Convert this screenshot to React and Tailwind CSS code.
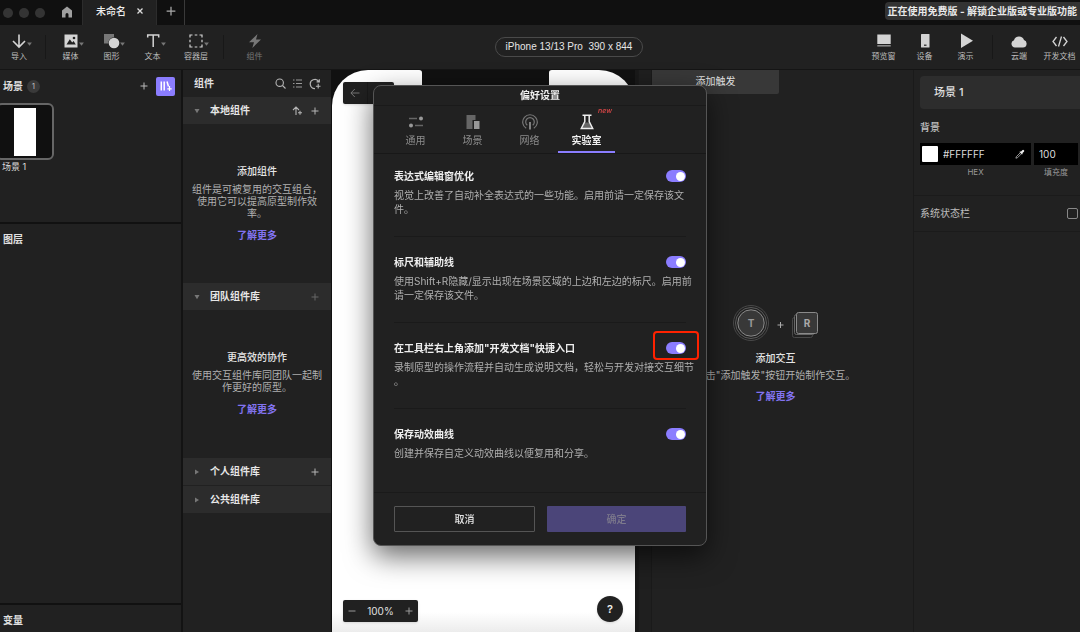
import React from "react";

const Caret = () => (
  <svg viewBox="0 0 6 5" className="absolute top-[9px] left-full h-[4px] w-[5px]" aria-hidden="true">
    <path d="M0 0.5h6L3 4.8z" fill="#777" />
  </svg>
);

function Tool({ label, children, caret, width = "w-[41px]", dim }) {
  return (
    <button className={`flex ${width} shrink-0 flex-col items-center gap-[2px] ${dim ? "text-[#777]" : "text-[#d4d4d4]"}`}>
      <span className="relative block">
        <svg viewBox="0 0 16 16" className="h-4 w-4" fill="currentColor" aria-hidden="true">
          {children}
        </svg>
        {caret && <Caret />}
      </span>
      <span className={`text-[8px] leading-[10px] whitespace-nowrap ${dim ? "" : "text-[#bdbdbd]"}`}>{label}</span>
    </button>
  );
}

const Divider = () => <span className="block h-6 w-px shrink-0 bg-[#181818]" />;

function Plus({ className = "h-[8px] w-[8px] text-[#b5b5b5]" }) {
  return (
    <svg viewBox="0 0 8 8" className={className} fill="none" stroke="currentColor" strokeWidth="1" aria-hidden="true">
      <path d="M4 0.5v7M0.5 4h7" />
    </svg>
  );
}

function TitleBar() {
  return (
    <header className="flex h-[25px] shrink-0 items-stretch bg-[#101010]">
      <div className="flex w-[47px] items-center gap-[6px] pl-[3px]">
        <span className="h-[10px] w-[10px] rounded-full bg-[#343434]" />
        <span className="h-[10px] w-[10px] rounded-full bg-[#343434]" />
        <span className="h-[10px] w-[10px] rounded-full bg-[#343434]" />
      </div>
      <button aria-label="主页" className="flex w-[35px] items-center justify-center pb-px pl-[5px]">
        <svg viewBox="0 0 12 12" className="h-3 w-3" fill="#a0a0a0" aria-hidden="true">
          <path d="M6 0.5 11 4.6V11.5H7.5V8.5a1.5 1.5 0 0 0-3 0V11.5H1V4.6z" />
        </svg>
      </button>
      <div className="flex w-[75px] items-center justify-between border-r border-l border-[#2c2c2c] bg-[#212121] px-[13px] pb-[3px]">
        <span className="text-[10px] font-medium text-[#eee]">未命名</span>
        <button aria-label="关闭">
          <svg viewBox="0 0 6 6" className="h-[6px] w-[6px]" stroke="#ddd" strokeWidth="1.3" aria-hidden="true">
            <path d="M0.5 0.5l5 5M5.5 0.5l-5 5" />
          </svg>
        </button>
      </div>
      <button aria-label="新建" className="flex w-[28px] items-center justify-center border-r border-[#3a3a3a] pb-[3px]">
        <Plus className="h-[10px] w-[10px] text-[#aaa]" />
      </button>
      <button className="mt-[2px] ml-auto h-[18px] rounded-l-sm bg-[#333] px-[3px] text-[10px] font-bold whitespace-nowrap text-[#e8e8e8]">
        正在使用免费版 - 解锁企业版或专业版功能
      </button>
    </header>
  );
}

function Toolbar() {
  return (
    <div className="flex h-[45px] shrink-0 items-center border-b border-[#151515] bg-[#212121]">
      <Tool label="导入" caret width="w-[38px]">
        <path d="M8 1.5v12.3M2 8l6 6 6-6" fill="none" stroke="currentColor" strokeWidth="1.6" />
      </Tool>
      <div className="flex items-center gap-1 pl-[7px]">
        <Divider />
        <div className="flex">
          <Tool label="媒体" caret>
            <path d="M1.5 1.5h13v13h-13z" />
            <path d="M3.5 11.5 6.8 6.2l2.4 3.2 1.4-1.4 2.2 3.5z" fill="#212121" />
            <circle cx="11" cy="5" r="1.3" fill="#212121" />
          </Tool>
          <Tool label="图形" caret>
            <path d="M0 1h10v3.2A6.2 6.2 0 0 0 4.2 10.500H0z" fill="#777" />
            <circle cx="10" cy="10" r="5.3" />
          </Tool>
          <Tool label="文本" caret>
            <path d="M2.700 4.500V2h11v2.500M8.200 2v12" fill="none" stroke="currentColor" strokeWidth="1.500" />
          </Tool>
          <Tool label="容器层" caret width="w-[46px]">
            <path
              d="M2 4.500V2h2.500M11.500 2H14v2.500M14 11.500V14h-2.500M4.500 14H2v-2.500M6.700 2h2.600M6.700 14h2.600M2 6.700v2.600M14 6.700v2.600"
              fill="none"
              stroke="currentColor"
              strokeWidth="1.200"
            />
          </Tool>
        </div>
        <Divider />
        <div className="pl-[6px]">
          <Tool label="组件" dim>
            <path d="M10.500 1 2 9.300h5L5.300 15 14 6.600H9z" />
          </Tool>
        </div>
      </div>
      <div className="flex flex-1 justify-center">
        <button className="h-5 rounded-full border border-[#4a4a4a] px-[10px] font-['Liberation_Sans',sans-serif] text-[10px] leading-[18px] whitespace-pre text-[#e6e6e6]">
          {"iPhone 13/13 Pro  390 x 844"}
        </button>
      </div>
      <div className="flex items-center">
        <Tool label="预览窗">
          <path d="M1.300 1.500h13.400v9.500H1.300z" />
          <path d="M1.300 12h13.400v1.600H1.300z" fill="#888" />
        </Tool>
        <Tool label="设备">
          <path d="M4.500 1h7.500a.5.5 0 0 1 .5.5v12.500a.5.5 0 0 1-.5.5H4.500a.5.5 0 0 1-.5-.5V1.500a.5.5 0 0 1 .5-.5z" />
          <path d="M7 11.600h2.500v1.200H7z" fill="#212121" />
        </Tool>
        <Tool label="演示">
          <path d="M3 .5 15 7.800 3 15z" />
        </Tool>
        <div className="px-[6px]">
          <Divider />
        </div>
        <Tool label="云端" width="w-[40px]">
          <path d="M4 14.500a3.700 3.700 0 0 1-1-7.200 5.200 5.200 0 0 1 10-.2 3.800 3.800 0 0 1-1 7.400z" />
        </Tool>
        <Tool label="开发文档">
          <path d="M4.500 4 1 8.500 4.500 13M11.500 4 15 8.500 11.500 13M9.500 3.500l-3 10" fill="none" stroke="currentColor" strokeWidth="1.300" />
        </Tool>
      </div>
    </div>
  );
}

function ScenePanel() {
  return (
    <aside className="flex w-[183px] shrink-0 flex-col border-r-2 border-[#131313] bg-[#212121]">
      <section className="h-[154px] border-b-2 border-[#111]">
        <div className="flex h-8 items-center pr-[6px] pl-[3px]">
          <h2 className="text-[10px] font-bold text-[#e0e0e0]">场景</h2>
          <span className="ml-1 h-[13px] w-[13px] rounded-full bg-[#3a3a3a] text-center text-[8px] leading-[13px] text-[#bbb]">1</span>
          <button aria-label="添加场景" className="ml-auto">
            <Plus className="h-[8px] w-[8px] text-[#bbb]" />
          </button>
          <button aria-label="组件库" className="ml-2 flex h-[19px] w-[19px] items-center justify-center rounded-[2px] bg-[#8b7dff]">
            <svg viewBox="0 0 12 12" className="h-3 w-3" fill="none" stroke="#fff" strokeWidth="1.500" aria-hidden="true">
              <path d="M1.300 1.500v9M4.200 1.500v9M7 1.500l1.500 5" />
              <path d="M9.500 6v5M7.300 8.800h4.400" strokeWidth="1.200" />
            </svg>
          </button>
        </div>
        <button className="mt-px -ml-1 flex h-[57px] w-[58px] items-center justify-center rounded-md border-2 border-[#666] bg-[#101010]">
          <span className="h-12 w-[22px] bg-white" />
        </button>
        <p className="pl-[2px] text-[9px] leading-[14px] text-[#ddd]">场景 1</p>
      </section>
      <section className="flex-1 px-[3px] pt-2">
        <h2 className="text-[10px] leading-[14px] font-bold text-[#e0e0e0]">图层</h2>
      </section>
      <section className="h-[29px] border-t-2 border-[#111] px-[3px] pt-2">
        <h2 className="text-[10px] leading-[14px] font-bold text-[#e0e0e0]">变量</h2>
      </section>
    </aside>
  );
}

function LibraryHeader({ title, open, children }) {
  return (
    <div className="flex h-[27px] items-center bg-[#2c2c2c] pr-3 pl-[11px]">
      <button className="flex items-center gap-[10px] text-[10px] font-bold text-[#e6e6e6]">
        <svg viewBox="0 0 6 6" className="h-[6px] w-[6px]" fill="#777" aria-hidden="true">
          <path d={open ? "M0.5 1h5L3 5.200z" : "M1 0.5v5L5 3z"} />
        </svg>
        {title}
      </button>
      <div className="ml-auto flex items-center gap-[9px]">{children}</div>
    </div>
  );
}

function EmptyState({ title, text, size }) {
  return (
    <div className={`flex flex-col items-center justify-center pb-[2px] whitespace-pre text-center ${size}`}>
      <h3 className="text-[10px] leading-[14px] font-medium text-[#e6e6e6]">{title}</h3>
      <p className="mt-[5px] text-[10px] leading-[12px] text-[#b0b0b0]">{text}</p>
      <a href="#more" className="mt-[9px] text-[10px] leading-[14px] font-bold text-[#8273f0]">
        了解更多
      </a>
    </div>
  );
}

function ComponentPanel() {
  return (
    <aside className="flex w-[148px] shrink-0 flex-col bg-[#212121]">
      <div className="flex h-[27px] items-center gap-[6px] pr-[10px] pl-[11px]">
        <h2 className="mr-auto text-[10px] font-bold text-[#e0e0e0]">组件</h2>
        <button aria-label="搜索">
          <svg viewBox="0 0 11 11" className="h-[11px] w-[11px]" fill="none" stroke="#b5b5b5" strokeWidth="1.100" aria-hidden="true">
            <circle cx="4.700" cy="4.700" r="3.700" />
            <path d="M7.500 7.500l3 3" />
          </svg>
        </button>
        <button aria-label="列表">
          <svg viewBox="0 0 11 11" className="h-[11px] w-[11px]" fill="none" stroke="#999" strokeWidth="1.100" aria-hidden="true">
            <path d="M1 2h1.500M4 2h6M1 5.500h1.500M4 5.500h6M1 9h1.500M4 9h6" />
          </svg>
        </button>
        <button aria-label="刷新">
          <svg viewBox="0 0 12 12" className="h-[12px] w-[12px]" fill="none" stroke="#b5b5b5" strokeWidth="1.200" aria-hidden="true">
            <path d="M9.800 3.600A4.600 4.600 0 1 0 6 10.600M10.300 1.200v2.700H7.600" />
            <path d="M9.200 5.800v4.800M6.900 8.200h4.600" strokeWidth="1.100" />
          </svg>
        </button>
      </div>
      <LibraryHeader title="本地组件" open>
        <button aria-label="上传组件">
          <svg viewBox="0 0 10 10" className="h-[10px] w-[10px]" fill="none" stroke="#b5b5b5" strokeWidth="1.100" aria-hidden="true">
            <path d="M4 9V1.200M1 4l3-3 3 3M8 4.800v4M6 6.800h4" />
          </svg>
        </button>
        <button aria-label="添加本地组件">
          <Plus />
        </button>
      </LibraryHeader>
      <EmptyState title="添加组件" text={"组件是可被复用的交互组合，\n使用它可以提高原型制作效\n率。"} size="h-[159px]" />
      <LibraryHeader title="团队组件库" open>
        <button aria-label="添加团队组件库">
          <Plus className="h-[8px] w-[8px] text-[#666]" />
        </button>
      </LibraryHeader>
      <EmptyState title="更高效的协作" text={"使用交互组件库同团队一起制\n作更好的原型。"} size="h-[148px]" />
      <div className="flex flex-col gap-px">
        <LibraryHeader title="个人组件库">
          <button aria-label="添加个人组件库">
            <Plus />
          </button>
        </LibraryHeader>
        <LibraryHeader title="公共组件库" />
      </div>
    </aside>
  );
}

function Canvas() {
  return (
    <main className="relative flex min-w-0 flex-1 bg-[#111] pl-px">
      <div className="flex flex-1 flex-col">
        <div className="flex h-9">
          <div className="w-[90px] rounded-tl-[38px] rounded-tr-[3px] bg-white" />
          <div className="flex-1" />
          <div className="w-[86px] rounded-tl-[3px] rounded-tr-[38px] bg-white" />
        </div>
        <div className="flex-1 bg-white" />
        <div className="h-5 bg-linear-to-b from-white to-[#ececec]" />
      </div>
      <div className="flex w-[17px]">
        <span className="w-[3px] bg-[#191919]" />
        <span className="flex-1 border-r border-l border-[#1a1a1a] bg-[#1f1f1f]" />
      </div>
      <div className="absolute top-3 left-3 flex h-[22px] w-[51px] items-center rounded-[2px] bg-[#212121] shadow">
        <button aria-label="返回" className="flex h-full w-[25px] items-center justify-center border-r border-[#1a1a1a]">
          <svg viewBox="0 0 10 10" className="h-[10px] w-[10px]" fill="none" stroke="#777" strokeWidth="1" aria-hidden="true">
            <path d="M9.500 5H1M4.800 1 0.900 5l3.900 4" />
          </svg>
        </button>
      </div>
      <div className="absolute bottom-[10px] left-3 flex h-[22px] w-[75px] items-center justify-between rounded-[2px] bg-[#212121] px-[5px] text-[10px] text-[#e0e0e0] shadow">
        <button aria-label="缩小">
          <svg viewBox="0 0 8 8" className="h-[8px] w-[8px]" stroke="#999" aria-hidden="true">
            <path d="M0.500 4h7" />
          </svg>
        </button>
        <span>100%</span>
        <button aria-label="放大">
          <Plus className="h-[8px] w-[8px] text-[#999]" />
        </button>
      </div>
      <button className="absolute right-[29px] bottom-[10px] h-[26px] w-[26px] rounded-full bg-[#212121] text-[11px] font-semibold text-[#eee] shadow">?</button>
    </main>
  );
}

function InteractionPanel() {
  return (
    <aside className="flex w-[261px] shrink-0 flex-col bg-[#212121]">
      <button className="h-[24px] w-[127px] rounded-br-[2px] bg-[#383838] pb-px text-[10px] leading-[23px] text-[#e0e0e0]">添加触发</button>
      <div className="flex flex-1 flex-col items-center pt-[210px] pr-[14px] whitespace-nowrap">
        <svg viewBox="0 0 88 40" className="h-10 w-[88px]" fill="none" aria-hidden="true">
          <circle cx="19" cy="19" r="17.500" stroke="#484848" />
          <circle cx="19" cy="19" r="15.500" stroke="#5c5c5c" />
          <circle cx="19" cy="19" r="13.200" fill="#383838" stroke="#8a8a8a" />
          <text x="19" y="22.800" textAnchor="middle" fontSize="10" fontWeight="700" fill="#999">T</text>
          <path d="M48.500 18v6M45.500 21h6" stroke="#aaa" />
          <rect x="60.500" y="13.500" width="20" height="20" rx="2" stroke="#484848" />
          <rect x="62.500" y="10.500" width="20" height="20" rx="2" fill="#212121" stroke="#666" />
          <rect x="64.500" y="8.500" width="21" height="21" rx="2" fill="#383838" stroke="#8a8a8a" />
          <text x="75" y="22.800" textAnchor="middle" fontSize="10" fontWeight="700" fill="#aaa">R</text>
        </svg>
        <h3 className="mt-[7px] text-[10px] leading-[14px] font-medium text-[#e6e6e6]">添加交互</h3>
        <p className="mt-[3px] text-[10px] leading-[14px] text-[#b0b0b0]">点击"添加触发"按钮开始制作交互。</p>
        <a href="#more" className="mt-[7px] text-[10px] leading-[14px] font-bold text-[#8273f0]">
          了解更多
        </a>
      </div>
    </aside>
  );
}

function PropertyPanel() {
  return (
    <aside className="w-[167px] shrink-0 border-l border-[#1a1a1a] bg-[#212121] pt-[6px]">
      <h2 className="ml-[6px] h-[33px] rounded-l bg-[#2d2d2d] pl-[14px] text-[11px] leading-[33px] font-medium text-[#e0e0e0]">场景 1</h2>
      <section className="border-b border-[#1b1b1b] pt-[11px] pr-[2px] pb-[17px] pl-[6px]">
        <h3 className="text-[10px] leading-[14px] font-medium text-[#c0c0c0]">背景</h3>
        <div className="mt-[9px] flex gap-[3px]">
          <div className="min-w-0 flex-1">
            <div className="flex h-[22px] items-center bg-black px-[2px]">
              <span className="h-4 w-4 shrink-0 rounded-[1px] bg-white" />
              <input id="hex" defaultValue="#FFFFFF" className="min-w-0 flex-1 bg-transparent pl-[5px] text-[10px] text-[#ddd] outline-none" />
              <button aria-label="吸管" className="mr-1 shrink-0">
                <svg viewBox="0 0 10 10" className="h-[10px] w-[10px]" aria-hidden="true">
                  <path d="M5.800 2.800 7.300 1.200a1.100 1.100 0 0 1 1.600 1.600L7.300 4.300l.5.5-.8.8-2.600-2.600.8-.8z" fill="#eee" />
                  <path d="M5.200 3.800 1.300 7.700.9 9.200l1.500-.4 3.900-3.900" fill="none" stroke="#bbb" strokeWidth=".8" />
                </svg>
              </button>
            </div>
            <label htmlFor="hex" className="mt-px block text-center text-[8px] leading-[12px] text-[#999]">HEX</label>
          </div>
          <div className="w-[44px] shrink-0">
            <input id="fill" defaultValue="100" className="block h-[22px] w-full bg-black px-[5px] text-[10px] text-[#ddd] outline-none" />
            <label htmlFor="fill" className="mt-px block text-center text-[8px] leading-[12px] text-[#999]">填充度</label>
          </div>
        </div>
      </section>
      <div className="flex h-9 items-center justify-between border-b border-[#1b1b1b] pr-[2px] pl-[6px]">
        <label htmlFor="statusbar" className="text-[10px] text-[#bdbdbd]">系统状态栏</label>
        <input id="statusbar" type="checkbox" className="h-[11px] w-[11px] appearance-none rounded-[2px] border border-[#888]" />
      </div>
    </aside>
  );
}

const settings = [
  { id: "expr", title: "表达式编辑窗优化", text: "视觉上改善了自动补全表达式的一些功能。启用前请一定保存该文\n件。" },
  { id: "ruler", title: "标尺和辅助线", text: "使用Shift+R隐藏/显示出现在场景区域的上边和左边的标尺。启用前\n请一定保存该文件。" },
  {
    id: "docs",
    title: '在工具栏右上角添加"开发文档"快捷入口',
    text: "录制原型的操作流程并自动生成说明文档，轻松与开发对接交互细节\n。",
    marked: true,
  },
  { id: "curve", title: "保存动效曲线", text: "创建并保存自定义动效曲线以便复用和分享。" },
];

const tabs = [
  {
    name: "通用",
    icon: (
      <g>
        <path d="M1 4.500h8M7 11.500h8" stroke="#666" strokeWidth="1.500" />
        <circle cx="13" cy="4.500" r="2" fill="#999" />
        <circle cx="3" cy="11.500" r="2" fill="#999" />
      </g>
    ),
  },
  {
    name: "场景",
    icon: (
      <g>
        <path d="M1.500 1h9v5H7.500v9h-6z" fill="#666" />
        <path d="M9 7h5.500v8H9z" fill="#999" />
      </g>
    ),
  },
  {
    name: "网络",
    icon: (
      <g fill="none" stroke="#777" strokeWidth="1.200">
        <path d="M4.200 14.300a7.300 7.300 0 1 1 7.600 0" />
        <path d="M5.300 11.300a4.300 4.300 0 1 1 5.400 0" />
        <path d="M8 8v7.500" stroke="#999" strokeWidth="1.600" />
      </g>
    ),
  },
  {
    name: "实验室",
    active: true,
    icon: (
      <g>
        <path d="M5.500 8.500h5l2.500 6H3z" fill="#666" />
        <path d="M3.500 1.300h9M5.800 1.500v6L2.300 14.500h11.400L10.200 7.500v-6" fill="none" stroke="#eee" strokeWidth="1.500" />
      </g>
    ),
  },
];

function Preferences() {
  return (
    <div className="pointer-events-none fixed inset-0 flex items-start justify-center pt-[85px]">
      <div
        role="dialog"
        aria-label="偏好设置"
        className="pointer-events-auto w-[334px] rounded-lg border border-[#555] bg-[#212121] shadow-[0_10px_28px_rgba(0,0,0,0.6)]"
      >
        <h2 className="h-5 border-b border-[#1a1a1a] text-center text-[10px] leading-[19px] font-bold text-[#eee]">偏好设置</h2>
        <div role="tablist" className="flex h-12 border-b border-[#181818] pl-[13px]">
          {tabs.map((t) => (
            <button
              key={t.name}
              role="tab"
              aria-selected={Boolean(t.active)}
              className={`relative flex w-[57px] flex-col items-center gap-[3px] border-b-2 pt-[8px] text-[10px] leading-[14px] ${
                t.active ? "border-[#8b7dff] font-bold text-[#f0f0f0]" : "border-transparent text-[#8c8c8c]"
              }`}
            >
              <svg viewBox="0 0 16 16" className="h-4 w-4" aria-hidden="true">
                {t.icon}
              </svg>
              {t.name}
              {t.active && <span className="absolute top-0 left-10 text-[7px] leading-[10px] font-medium text-[#e04848] italic">new</span>}
            </button>
          ))}
        </div>
        <ul className="px-[20px]">
          {settings.map((s) => (
            <li key={s.id} className="border-b border-[#1a1a1a] pt-[18px] pb-[19px] first:pt-[15px] last:border-b-0 last:pb-[17px]">
              <div className="flex h-[14px] items-center justify-between">
                <label htmlFor={s.id} className="text-[10px] font-bold text-[#eee]">{s.title}</label>
                <span className="relative flex">
                  <input
                    id={s.id}
                    type="checkbox"
                    role="switch"
                    defaultChecked
                    className="flex h-3 w-5 appearance-none items-center rounded-full bg-[#555] px-[1px] before:h-[9px] before:w-[9px] before:rounded-full before:bg-white checked:justify-end checked:bg-[#8b7dff]"
                  />
                  {s.marked && <span className="pointer-events-none absolute -inset-x-[13px] -top-[11px] -bottom-[6px] rounded border-2 border-[#ff2200]" />}
                </span>
              </div>
              <p className="mt-[5px] mb-px min-h-[28px] text-[10px] leading-[14px] whitespace-pre text-[#b0b0b0]">{s.text}</p>
            </li>
          ))}
        </ul>
        <div className="flex gap-3 border-t border-[#1a1a1a] px-[20px] py-[13px]">
          <button className="h-[26px] flex-1 rounded-[1px] border border-[#555] text-[10px] font-medium text-[#e6e6e6]">取消</button>
          <button disabled className="h-[26px] flex-1 rounded-[1px] bg-[#4b4579] text-[10px] font-medium text-[#7d7a8c]">确定</button>
        </div>
      </div>
    </div>
  );
}

export default function App() {
  return (
    <div className="flex h-screen min-h-[600px] flex-col overflow-hidden bg-[#212121] font-['Inter','Noto_Sans_CJK_SC',sans-serif]">
      <TitleBar />
      <Toolbar />
      <div className="flex min-h-0 flex-1">
        <ScenePanel />
        <ComponentPanel />
        <Canvas />
        <InteractionPanel />
        <PropertyPanel />
      </div>
      <Preferences />
    </div>
  );
}
